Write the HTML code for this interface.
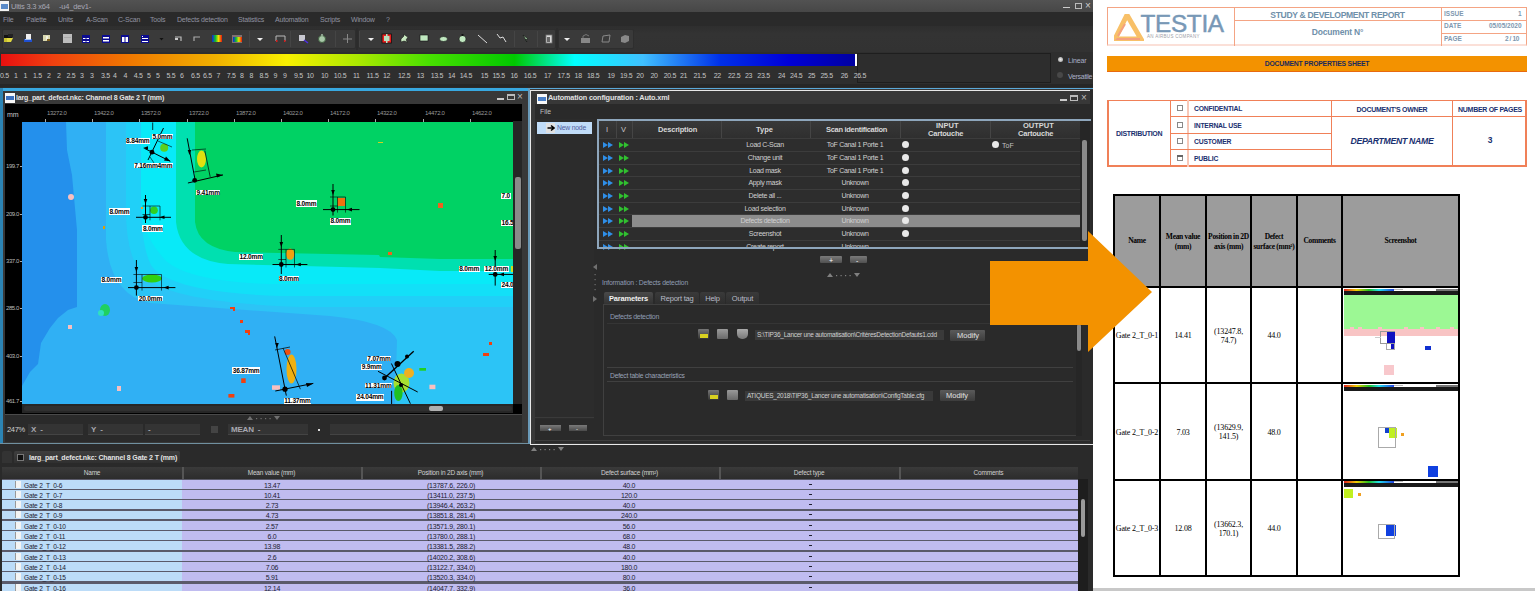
<!DOCTYPE html>
<html><head><meta charset="utf-8">
<style>
*{box-sizing:border-box;margin:0;padding:0}
html,body{width:1535px;height:591px;overflow:hidden;background:#fff;font-family:"Liberation Sans",sans-serif}
.a{position:absolute}
.t{position:absolute;white-space:nowrap;line-height:1}
#app{left:0;top:0;width:1093px;height:591px;background:#2b2b2b;overflow:hidden}
#doc{left:1093px;top:0;width:442px;height:591px;background:#fff;overflow:hidden}
svg{position:absolute}
</style></head><body>
<div id="app" class="a">

<div class="a" style="left:0px;top:0px;width:1093px;height:12px;background:linear-gradient(#525252,#474747)"></div>
<div class="a" style="left:0px;top:1px;width:9px;height:10px;background:#f4f4f4"></div>
<div class="a" style="left:1px;top:4px;width:7px;height:5px;background:#5a8ac8"></div>
<div class="t" style="left:11px;top:2.5px;font-size:7.5px;color:#a8a8b4;font-weight:normal;letter-spacing:-0.2px">Ultis 3.3 x64</div>
<div class="t" style="left:59px;top:2.5px;font-size:7.5px;color:#a8a8b4;font-weight:normal;letter-spacing:-0.2px">-u4_dev1-</div>
<div class="a" style="left:1063px;top:7px;width:7px;height:1px;background:#ccc"></div>
<div class="a" style="left:1075px;top:3px;width:7px;height:6px;border:1px solid #bbb"></div>
<div class="t" style="left:1085px;top:1px;font-size:10px;color:#ccc;font-weight:normal;">&#215;</div>
<div class="a" style="left:0px;top:12px;width:1093px;height:14px;background:#2a2a2a"></div>
<div class="t" style="left:3px;top:15.5px;font-size:7px;color:#9092a0;font-weight:normal;letter-spacing:-0.2px">File</div>
<div class="t" style="left:26px;top:15.5px;font-size:7px;color:#9092a0;font-weight:normal;letter-spacing:-0.2px">Palette</div>
<div class="t" style="left:58px;top:15.5px;font-size:7px;color:#9092a0;font-weight:normal;letter-spacing:-0.2px">Units</div>
<div class="t" style="left:86px;top:15.5px;font-size:7px;color:#9092a0;font-weight:normal;letter-spacing:-0.2px">A-Scan</div>
<div class="t" style="left:118px;top:15.5px;font-size:7px;color:#9092a0;font-weight:normal;letter-spacing:-0.2px">C-Scan</div>
<div class="t" style="left:150px;top:15.5px;font-size:7px;color:#9092a0;font-weight:normal;letter-spacing:-0.2px">Tools</div>
<div class="t" style="left:177px;top:15.5px;font-size:7px;color:#9092a0;font-weight:normal;letter-spacing:-0.2px">Defects detection</div>
<div class="t" style="left:238px;top:15.5px;font-size:7px;color:#9092a0;font-weight:normal;letter-spacing:-0.2px">Statistics</div>
<div class="t" style="left:275px;top:15.5px;font-size:7px;color:#9092a0;font-weight:normal;letter-spacing:-0.2px">Automation</div>
<div class="t" style="left:320px;top:15.5px;font-size:7px;color:#9092a0;font-weight:normal;letter-spacing:-0.2px">Scripts</div>
<div class="t" style="left:351px;top:15.5px;font-size:7px;color:#9092a0;font-weight:normal;letter-spacing:-0.2px">Window</div>
<div class="t" style="left:386px;top:15.5px;font-size:7px;color:#9092a0;font-weight:normal;letter-spacing:-0.2px">?</div>
<div class="a" style="left:0px;top:26px;width:1093px;height:26px;background:linear-gradient(#2e2e2e,#333 30%,#323232)"></div>
<div class="a" style="left:2px;top:29px;width:354px;height:20px;background:#3a3a3a;border:1px solid #2e2e2e;border-radius:2px"></div>
<div class="a" style="left:358px;top:29px;width:198px;height:20px;background:#3a3a3a;border:1px solid #2e2e2e;border-radius:2px"></div>
<div class="a" style="left:558px;top:29px;width:76px;height:20px;background:#3a3a3a;border:1px solid #2e2e2e;border-radius:2px"></div>
<svg style="left:0;top:0" width="640" height="52"><rect x="4" y="35" width="8" height="4" fill="#111"/><rect x="8" y="34" width="5" height="3" fill="#222"/><polygon points="4,42 6,38 13,38 11,42" fill="#e0d840"/><rect x="4" y="38" width="3" height="4" fill="#c8c030"/><rect x="26" y="34" width="5" height="5" fill="#f0f0f0"/><rect x="24" y="39" width="8" height="3" fill="#2050d0"/><rect x="25" y="39" width="6" height="1" fill="#a0c0f0"/><rect x="43" y="35" width="7" height="6" fill="#d8d8b0"/><rect x="46" y="36" width="2" height="4" fill="#f0f0e0"/><rect x="47" y="39" width="3" height="2" fill="#806020"/><rect x="63" y="34" width="9" height="9" fill="#bdbdbd"/><rect x="64" y="37" width="7" height="1" fill="#a8a8a8"/><rect x="82" y="35" width="8" height="8" fill="#0c0c90"/><rect x="83" y="38" width="6" height="1" fill="#fff"/><rect x="83" y="41" width="6" height="1" fill="#fff"/><rect x="85.5" y="36" width="1" height="6" fill="#0c0c90"/><rect x="102" y="35" width="8" height="8" fill="#0c0c90"/><rect x="103" y="37" width="6" height="1.5" fill="#fff"/><rect x="103" y="40" width="6" height="1.5" fill="#fff"/><rect x="121" y="35" width="8" height="8" fill="#0c0c90"/><rect x="122" y="37" width="2.5" height="5" fill="#fff"/><rect x="125.5" y="37" width="2.5" height="5" fill="#fff"/><rect x="141" y="35" width="8" height="8" fill="#0c0c90"/><rect x="142" y="38" width="6" height="1" fill="#fff"/><rect x="142" y="41" width="6" height="1" fill="#fff"/><rect x="142" y="36" width="1" height="1" fill="#fff"/><polygon points="159.5,38 163.5,38 161.5,40.5" fill="#111"/><path d="M175 37 h6 v4" fill="none" stroke="#bbb" stroke-width="1.2"/><rect x="175" y="38" width="3" height="2" fill="#ccc"/><path d="M200 37 h-6 v4" fill="none" stroke="#aaa" stroke-width="1.2"/><defs><linearGradient id="rb"><stop offset="0" stop-color="#1020e0"/><stop offset=".35" stop-color="#10c030"/><stop offset=".65" stop-color="#f0e000"/><stop offset="1" stop-color="#e81010"/></linearGradient></defs><rect x="212" y="35" width="10" height="7" fill="url(#rb)"/><rect x="232" y="35" width="10" height="8" fill="#807070"/><rect x="233" y="37" width="9" height="5" fill="url(#rb)"/><rect x="249" y="31" width="1" height="16" fill="#454545"/><polygon points="257,38 263,38 260,41" fill="#eee"/><path d="M276 36 h9 M276 36 v5 M285 36 v5" stroke="#b8b8b8" stroke-width="1"/><rect x="276" y="40" width="1.5" height="2" fill="#d02020"/><rect x="284" y="40" width="1.5" height="2" fill="#d02020"/><rect x="290" y="31" width="1" height="16" fill="#454545"/><rect x="299" y="35" width="6" height="6" fill="#c8c8d0"/><line x1="304" y1="40" x2="308" y2="43" stroke="#5030e0" stroke-width="1.5"/><circle cx="322" cy="39" r="3.5" fill="#a8c8a8" stroke="#406040" stroke-width="1"/><rect x="321" y="34" width="2" height="2" fill="#8aa08a"/><rect x="335" y="31" width="1" height="16" fill="#454545"/><path d="M343 39 h9 M347.5 34 v9" stroke="#888" stroke-width="1"/><rect x="356" y="28" width="2" height="22" fill="#2c2c2c"/><rect x="359" y="31" width="1" height="16" fill="#454545"/><polygon points="368,38 374,38 371,41" fill="#eee"/><rect x="382" y="34" width="9.5" height="9" fill="#e82020" stroke="#111" stroke-width="0.8"/><rect x="384" y="36" width="5.5" height="5" fill="#b8e0c0"/><rect x="386" y="34" width="1.5" height="9" fill="#b8e0c0"/><polygon points="401,39 404,36 404,34 406,36 408,37 406,40 408,42 404,41 401,42" fill="#c8e8c0" stroke="#111" stroke-width="0.5"/><rect x="420" y="35" width="8" height="6" fill="#c0e8c0" stroke="#111" stroke-width="0.6"/><ellipse cx="443.5" cy="39" rx="4" ry="2.5" fill="#c0e8c0" stroke="#111" stroke-width="0.6"/><circle cx="462.5" cy="39" r="3.5" fill="#c0e8c0" stroke="#111" stroke-width="0.6"/><rect x="461.5" y="34" width="2" height="2" fill="#111"/><line x1="478" y1="35" x2="487" y2="43" stroke="#ddd" stroke-width="1"/><polyline points="497,34 500,38 503,37 506,42" fill="none" stroke="#ddd" stroke-width="1"/><rect x="514" y="31" width="1" height="16" fill="#454545"/><polygon points="523,35 528,39 525,40 527,42" fill="#a8d8a8" stroke="#111" stroke-width="0.6"/><rect x="537" y="31" width="1" height="16" fill="#454545"/><rect x="546" y="35" width="6" height="8" fill="#d8d8d8" stroke="#777" stroke-width="0.8"/><rect x="547" y="37" width="3" height="5" fill="#666"/><rect x="556" y="28" width="2" height="22" fill="#2c2c2c"/><polygon points="564,38 570,38 567,41" fill="#eee"/><rect x="581" y="38" width="9" height="5" fill="#888"/><path d="M583 38 v-2 q3 -3 6 0" fill="none" stroke="#777"/><polygon points="603,36 610,35 609,42 602,42" fill="none" stroke="#888" stroke-width="1"/><polygon points="621,37 625,35 629,36 629,41 625,43 621,42" fill="#888"/></svg>
<div class="a" style="left:0px;top:52px;width:1093px;height:35px;background:#2e2e2e"></div>
<div class="a" style="left:0px;top:84px;width:1093px;height:3px;background:#262626"></div>
<div class="a" style="left:857px;top:53px;width:194px;height:30px;background:#2d2d2d;border:1px solid #1e1e1e"></div>
<div class="a" style="left:1px;top:54px;width:856px;height:12px;background:linear-gradient(90deg,#e81010 0%,#f04010 6%,#f07800 15%,#f0b000 25%,#f8f000 33.4%,#a8e800 42%,#48e000 50%,#00c800 60%,#00ffff 67%,#40c0ff 75%,#0030e8 84%,#0000d8 92%,#0000a0 100%)"></div>
<div class="a" style="left:855px;top:54px;width:2px;height:12px;background:#fff"></div>
<div class="t" style="left:0px;top:71.5px;font-size:7px;color:#c4c4c4;font-weight:normal;letter-spacing:-0.3px">0.5</div>
<div class="t" style="left:14px;top:71.5px;font-size:7px;color:#c4c4c4;font-weight:normal;letter-spacing:-0.3px">1</div>
<div class="t" style="left:23.5px;top:71.5px;font-size:7px;color:#c4c4c4;font-weight:normal;letter-spacing:-0.3px">1</div>
<div class="t" style="left:33px;top:71.5px;font-size:7px;color:#c4c4c4;font-weight:normal;letter-spacing:-0.3px">1.5</div>
<div class="t" style="left:47px;top:71.5px;font-size:7px;color:#c4c4c4;font-weight:normal;letter-spacing:-0.3px">2</div>
<div class="t" style="left:57px;top:71.5px;font-size:7px;color:#c4c4c4;font-weight:normal;letter-spacing:-0.3px">2</div>
<div class="t" style="left:66.5px;top:71.5px;font-size:7px;color:#c4c4c4;font-weight:normal;letter-spacing:-0.3px">2.5</div>
<div class="t" style="left:80px;top:71.5px;font-size:7px;color:#c4c4c4;font-weight:normal;letter-spacing:-0.3px">3</div>
<div class="t" style="left:90px;top:71.5px;font-size:7px;color:#c4c4c4;font-weight:normal;letter-spacing:-0.3px">3</div>
<div class="t" style="left:101px;top:71.5px;font-size:7px;color:#c4c4c4;font-weight:normal;letter-spacing:-0.3px">3.5</div>
<div class="t" style="left:113px;top:71.5px;font-size:7px;color:#c4c4c4;font-weight:normal;letter-spacing:-0.3px">4</div>
<div class="t" style="left:123.5px;top:71.5px;font-size:7px;color:#c4c4c4;font-weight:normal;letter-spacing:-0.3px">4</div>
<div class="t" style="left:133.7px;top:71.5px;font-size:7px;color:#c4c4c4;font-weight:normal;letter-spacing:-0.3px">4.5</div>
<div class="t" style="left:147px;top:71.5px;font-size:7px;color:#c4c4c4;font-weight:normal;letter-spacing:-0.3px">5</div>
<div class="t" style="left:156px;top:71.5px;font-size:7px;color:#c4c4c4;font-weight:normal;letter-spacing:-0.3px">5</div>
<div class="t" style="left:166.5px;top:71.5px;font-size:7px;color:#c4c4c4;font-weight:normal;letter-spacing:-0.3px">5.5</div>
<div class="t" style="left:180px;top:71.5px;font-size:7px;color:#c4c4c4;font-weight:normal;letter-spacing:-0.3px">6</div>
<div class="t" style="left:191px;top:71.5px;font-size:7px;color:#c4c4c4;font-weight:normal;letter-spacing:-0.3px">6.5</div>
<div class="t" style="left:203px;top:71.5px;font-size:7px;color:#c4c4c4;font-weight:normal;letter-spacing:-0.3px">6.5</div>
<div class="t" style="left:216.5px;top:71.5px;font-size:7px;color:#c4c4c4;font-weight:normal;letter-spacing:-0.3px">7</div>
<div class="t" style="left:226.7px;top:71.5px;font-size:7px;color:#c4c4c4;font-weight:normal;letter-spacing:-0.3px">7.5</div>
<div class="t" style="left:240px;top:71.5px;font-size:7px;color:#c4c4c4;font-weight:normal;letter-spacing:-0.3px">8</div>
<div class="t" style="left:249.4px;top:71.5px;font-size:7px;color:#c4c4c4;font-weight:normal;letter-spacing:-0.3px">8</div>
<div class="t" style="left:259.5px;top:71.5px;font-size:7px;color:#c4c4c4;font-weight:normal;letter-spacing:-0.3px">8.5</div>
<div class="t" style="left:273.6px;top:71.5px;font-size:7px;color:#c4c4c4;font-weight:normal;letter-spacing:-0.3px">9</div>
<div class="t" style="left:283px;top:71.5px;font-size:7px;color:#c4c4c4;font-weight:normal;letter-spacing:-0.3px">9</div>
<div class="t" style="left:294px;top:71.5px;font-size:7px;color:#c4c4c4;font-weight:normal;letter-spacing:-0.3px">9.5</div>
<div class="t" style="left:306.4px;top:71.5px;font-size:7px;color:#c4c4c4;font-weight:normal;letter-spacing:-0.3px">10</div>
<div class="t" style="left:321px;top:71.5px;font-size:7px;color:#c4c4c4;font-weight:normal;letter-spacing:-0.3px">10</div>
<div class="t" style="left:333.8px;top:71.5px;font-size:7px;color:#c4c4c4;font-weight:normal;letter-spacing:-0.3px">10.5</div>
<div class="t" style="left:353px;top:71.5px;font-size:7px;color:#c4c4c4;font-weight:normal;letter-spacing:-0.3px">11</div>
<div class="t" style="left:366.6px;top:71.5px;font-size:7px;color:#c4c4c4;font-weight:normal;letter-spacing:-0.3px">11.5</div>
<div class="t" style="left:383px;top:71.5px;font-size:7px;color:#c4c4c4;font-weight:normal;letter-spacing:-0.3px">12</div>
<div class="t" style="left:398px;top:71.5px;font-size:7px;color:#c4c4c4;font-weight:normal;letter-spacing:-0.3px">12.5</div>
<div class="t" style="left:416.7px;top:71.5px;font-size:7px;color:#c4c4c4;font-weight:normal;letter-spacing:-0.3px">13</div>
<div class="t" style="left:430.7px;top:71.5px;font-size:7px;color:#c4c4c4;font-weight:normal;letter-spacing:-0.3px">13.5</div>
<div class="t" style="left:448px;top:71.5px;font-size:7px;color:#c4c4c4;font-weight:normal;letter-spacing:-0.3px">14</div>
<div class="t" style="left:459.7px;top:71.5px;font-size:7px;color:#c4c4c4;font-weight:normal;letter-spacing:-0.3px">14.5</div>
<div class="t" style="left:480.8px;top:71.5px;font-size:7px;color:#c4c4c4;font-weight:normal;letter-spacing:-0.3px">15</div>
<div class="t" style="left:492.5px;top:71.5px;font-size:7px;color:#c4c4c4;font-weight:normal;letter-spacing:-0.3px">15.5</div>
<div class="t" style="left:510.5px;top:71.5px;font-size:7px;color:#c4c4c4;font-weight:normal;letter-spacing:-0.3px">16</div>
<div class="t" style="left:523.8px;top:71.5px;font-size:7px;color:#c4c4c4;font-weight:normal;letter-spacing:-0.3px">16.5</div>
<div class="t" style="left:544px;top:71.5px;font-size:7px;color:#c4c4c4;font-weight:normal;letter-spacing:-0.3px">17</div>
<div class="t" style="left:557.4px;top:71.5px;font-size:7px;color:#c4c4c4;font-weight:normal;letter-spacing:-0.3px">17.5</div>
<div class="t" style="left:574.6px;top:71.5px;font-size:7px;color:#c4c4c4;font-weight:normal;letter-spacing:-0.3px">18</div>
<div class="t" style="left:587px;top:71.5px;font-size:7px;color:#c4c4c4;font-weight:normal;letter-spacing:-0.3px">18.5</div>
<div class="t" style="left:607.4px;top:71.5px;font-size:7px;color:#c4c4c4;font-weight:normal;letter-spacing:-0.3px">19</div>
<div class="t" style="left:620px;top:71.5px;font-size:7px;color:#c4c4c4;font-weight:normal;letter-spacing:-0.3px">19.5</div>
<div class="t" style="left:636.3px;top:71.5px;font-size:7px;color:#c4c4c4;font-weight:normal;letter-spacing:-0.3px">20</div>
<div class="t" style="left:650.4px;top:71.5px;font-size:7px;color:#c4c4c4;font-weight:normal;letter-spacing:-0.3px">20</div>
<div class="t" style="left:663.7px;top:71.5px;font-size:7px;color:#c4c4c4;font-weight:normal;letter-spacing:-0.3px">20.5</div>
<div class="t" style="left:680px;top:71.5px;font-size:7px;color:#c4c4c4;font-weight:normal;letter-spacing:-0.3px">21</div>
<div class="t" style="left:693.4px;top:71.5px;font-size:7px;color:#c4c4c4;font-weight:normal;letter-spacing:-0.3px">21.5</div>
<div class="t" style="left:713.7px;top:71.5px;font-size:7px;color:#c4c4c4;font-weight:normal;letter-spacing:-0.3px">22</div>
<div class="t" style="left:728px;top:71.5px;font-size:7px;color:#c4c4c4;font-weight:normal;letter-spacing:-0.3px">22.5</div>
<div class="t" style="left:745px;top:71.5px;font-size:7px;color:#c4c4c4;font-weight:normal;letter-spacing:-0.3px">23</div>
<div class="t" style="left:757.3px;top:71.5px;font-size:7px;color:#c4c4c4;font-weight:normal;letter-spacing:-0.3px">23.5</div>
<div class="t" style="left:778px;top:71.5px;font-size:7px;color:#c4c4c4;font-weight:normal;letter-spacing:-0.3px">24</div>
<div class="t" style="left:790px;top:71.5px;font-size:7px;color:#c4c4c4;font-weight:normal;letter-spacing:-0.3px">24.5</div>
<div class="t" style="left:808px;top:71.5px;font-size:7px;color:#c4c4c4;font-weight:normal;letter-spacing:-0.3px">25</div>
<div class="t" style="left:820.5px;top:71.5px;font-size:7px;color:#c4c4c4;font-weight:normal;letter-spacing:-0.3px">25.5</div>
<div class="t" style="left:840.7px;top:71.5px;font-size:7px;color:#c4c4c4;font-weight:normal;letter-spacing:-0.3px">26</div>
<div class="t" style="left:853.7px;top:71.5px;font-size:7px;color:#c4c4c4;font-weight:normal;letter-spacing:-0.3px">26.5</div>
<div class="a" style="left:1058px;top:57px;width:5px;height:5px;background:radial-gradient(#eee,#999);border-radius:50%"></div>
<div class="t" style="left:1068px;top:56.5px;font-size:7px;color:#aab0c8;font-weight:normal;letter-spacing:-0.2px">Linear</div>
<div class="a" style="left:1057px;top:72px;width:6px;height:6px;background:#484848;border-radius:50%"></div>
<div class="t" style="left:1068px;top:72.5px;font-size:7px;color:#aab0c8;font-weight:normal;letter-spacing:-0.3px">Versatile</div>
<div class="a" style="left:0px;top:88px;width:531px;height:356px;background:#383838"></div>
<div class="a" style="left:0px;top:88px;width:530px;height:3px;background:#38a8e0"></div>
<div class="a" style="left:0px;top:88px;width:3px;height:356px;background:#2c84b4"></div>
<div class="a" style="left:0px;top:443px;width:530px;height:2px;background:#7090a0"></div>
<div class="a" style="left:528px;top:88px;width:2px;height:356px;background:#6a9ab8"></div>
<div class="a" style="left:5px;top:93px;width:10px;height:10px;background:#f8f8f8"></div>
<div class="a" style="left:6px;top:96px;width:8px;height:4px;background:#3a70c0"></div>
<div class="t" style="left:16px;top:93.5px;font-size:7px;color:#e4e4e4;font-weight:bold;letter-spacing:-0.15px">larg_part_defect.nkc: Channel 8 Gate 2 T (mm)</div>
<div class="a" style="left:497px;top:98px;width:7px;height:2px;background:#ccc"></div>
<div class="a" style="left:507px;top:94px;width:8px;height:6px;border:1px solid #bbb;border-top-width:2px"></div>
<div class="t" style="left:517px;top:92px;font-size:10px;color:#bbb;font-weight:normal;">&#215;</div>
<div class="a" style="left:5px;top:104px;width:517px;height:310px;background:#000"></div>
<div class="t" style="left:7px;top:111px;font-size:7px;color:#c8c8c8;font-weight:normal;">mm</div>
<div class="a" style="left:45px;top:119px;width:1px;height:3px;background:#aaa"></div>
<div class="t" style="left:47px;top:110px;font-size:6px;color:#999;font-weight:normal;letter-spacing:-0.3px">13272.0</div>
<div class="a" style="left:92px;top:119px;width:1px;height:3px;background:#aaa"></div>
<div class="t" style="left:94px;top:110px;font-size:6px;color:#999;font-weight:normal;letter-spacing:-0.3px">13422.0</div>
<div class="a" style="left:139px;top:119px;width:1px;height:3px;background:#aaa"></div>
<div class="t" style="left:141px;top:110px;font-size:6px;color:#999;font-weight:normal;letter-spacing:-0.3px">13572.0</div>
<div class="a" style="left:187px;top:119px;width:1px;height:3px;background:#aaa"></div>
<div class="t" style="left:189px;top:110px;font-size:6px;color:#999;font-weight:normal;letter-spacing:-0.3px">13722.0</div>
<div class="a" style="left:234px;top:119px;width:1px;height:3px;background:#aaa"></div>
<div class="t" style="left:236px;top:110px;font-size:6px;color:#999;font-weight:normal;letter-spacing:-0.3px">13872.0</div>
<div class="a" style="left:281px;top:119px;width:1px;height:3px;background:#aaa"></div>
<div class="t" style="left:283px;top:110px;font-size:6px;color:#999;font-weight:normal;letter-spacing:-0.3px">14022.0</div>
<div class="a" style="left:328px;top:119px;width:1px;height:3px;background:#aaa"></div>
<div class="t" style="left:330px;top:110px;font-size:6px;color:#999;font-weight:normal;letter-spacing:-0.3px">14172.0</div>
<div class="a" style="left:375px;top:119px;width:1px;height:3px;background:#aaa"></div>
<div class="t" style="left:377px;top:110px;font-size:6px;color:#999;font-weight:normal;letter-spacing:-0.3px">14322.0</div>
<div class="a" style="left:423px;top:119px;width:1px;height:3px;background:#aaa"></div>
<div class="t" style="left:425px;top:110px;font-size:6px;color:#999;font-weight:normal;letter-spacing:-0.3px">14472.0</div>
<div class="a" style="left:470px;top:119px;width:1px;height:3px;background:#aaa"></div>
<div class="t" style="left:472px;top:110px;font-size:6px;color:#999;font-weight:normal;letter-spacing:-0.3px">14622.0</div>
<div class="t" style="left:6px;top:163px;font-size:6px;color:#bbb;font-weight:normal;letter-spacing:-0.4px">199.7</div>
<div class="a" style="left:20px;top:166px;width:2px;height:1px;background:#aaa"></div>
<div class="t" style="left:6px;top:211px;font-size:6px;color:#bbb;font-weight:normal;letter-spacing:-0.4px">209.0</div>
<div class="a" style="left:20px;top:214px;width:2px;height:1px;background:#aaa"></div>
<div class="t" style="left:6px;top:258px;font-size:6px;color:#bbb;font-weight:normal;letter-spacing:-0.4px">337.0</div>
<div class="a" style="left:20px;top:261px;width:2px;height:1px;background:#aaa"></div>
<div class="t" style="left:6px;top:305px;font-size:6px;color:#bbb;font-weight:normal;letter-spacing:-0.4px">285.0</div>
<div class="a" style="left:20px;top:308px;width:2px;height:1px;background:#aaa"></div>
<div class="t" style="left:6px;top:353px;font-size:6px;color:#bbb;font-weight:normal;letter-spacing:-0.4px">403.0</div>
<div class="a" style="left:20px;top:356px;width:2px;height:1px;background:#aaa"></div>
<div class="t" style="left:6px;top:398px;font-size:6px;color:#bbb;font-weight:normal;letter-spacing:-0.4px">461.7</div>
<div class="a" style="left:20px;top:401px;width:2px;height:1px;background:#aaa"></div>
<div class="a" style="left:513px;top:121px;width:9px;height:283px;background:#262626"></div>
<div class="a" style="left:515px;top:177px;width:6px;height:72px;background:#8a8a8a;border-radius:2px"></div>
<div class="a" style="left:22px;top:404px;width:491px;height:9px;background:#262626"></div>
<div class="a" style="left:24px;top:406px;width:488px;height:5px;background:#303030;border-radius:2px"></div>
<div class="a" style="left:429px;top:406px;width:14px;height:5px;background:#b0b0b0;border-radius:2px"></div>
<div class="a" style="left:5px;top:414px;width:517px;height:1px;background:#4a4a4a"></div>
<div class="a" style="left:5px;top:415px;width:517px;height:27px;background:#2a2a2a"></div>
<div class="t" style="left:7px;top:426px;font-size:7.5px;color:#d0d0d0;font-weight:normal;letter-spacing:-0.3px">247%</div>
<div class="a" style="left:28px;top:424px;width:55px;height:11px;background:#343434;border-bottom:1px solid #444"></div>
<div class="t" style="left:31px;top:426px;font-size:8px;color:#a8a8b0;font-weight:bold;letter-spacing:-0.2px">X&nbsp; -</div>
<div class="a" style="left:88px;top:424px;width:55px;height:11px;background:#343434;border-bottom:1px solid #444"></div>
<div class="t" style="left:91px;top:426px;font-size:8px;color:#a8a8b0;font-weight:bold;letter-spacing:-0.2px">Y&nbsp; -</div>
<div class="a" style="left:145px;top:424px;width:55px;height:11px;background:#343434;border-bottom:1px solid #444"></div>
<div class="t" style="left:148px;top:426px;font-size:8px;color:#a8a8b0;font-weight:bold;letter-spacing:-0.2px">-</div>
<div class="a" style="left:228px;top:424px;width:80px;height:11px;background:#343434;border-bottom:1px solid #444"></div>
<div class="t" style="left:231px;top:426px;font-size:8px;color:#a8a8b0;font-weight:bold;letter-spacing:-0.2px">MEAN&nbsp; -</div>
<div class="a" style="left:330px;top:424px;width:70px;height:11px;background:#343434;border-bottom:1px solid #444"></div>
<div class="a" style="left:211px;top:426px;width:7px;height:7px;background:#444"></div>
<div class="a" style="left:318px;top:429px;width:2px;height:2px;background:#ddd"></div>
<svg style="left:246px;top:415px" width="36" height="6"><polygon points="1,5 4,1 7,5" fill="#707070"/><rect x="10.0" y="3" width="1.2" height="1.2" fill="#707070"/><rect x="14.5" y="3" width="1.2" height="1.2" fill="#707070"/><rect x="19.0" y="3" width="1.2" height="1.2" fill="#707070"/><rect x="23.5" y="3" width="1.2" height="1.2" fill="#707070"/><polygon points="28,1 34,1 31,5" fill="#707070"/></svg>
<svg style="left:22px;top:122px" width="491" height="282" viewBox="22 122 491 282">
<rect x="22" y="121" width="491" height="283" fill="#2cc4f6"/>
<path d="M126 122 L513 122 L513 307 L300 307 Q160 302 140 272 Q126 252 126 210 Z" fill="#20d0f8"/>
<path d="M141 122 L513 122 L513 296 L280 296 Q168 292 151 265 Q141 245 141 200 Z" fill="#12e0f8"/>
<path d="M141 122 L513 122 L513 284 L270 284 Q178 281 161 255 Q141 232 141 200 Z" fill="#08eaf8"/>
<path d="M176 122 L513 122 L513 271 L440 271 L380 268 L228 264 Q180 260 176 222 Z" fill="#00e0b0"/>
<path d="M195 122 L513 122 L513 259 L440 259 L380 257 L379 255 L235 252 Q198 248 195 222 Z" fill="#00d264"/>
<path d="M22 122 L106 122 L106 240 Q110 295 150 303 L330 316 Q390 322 397 340 L395 404 L22 404 Z" fill="#30b0f4"/>
<path d="M22 122 L66 122 L67 150 L72 175 L77 230 L77 307 L68 310 L58 318 L50 328 L41 343 L38 364 L30 372 L26 379 L22 386 Z" fill="#2490ec"/>
<ellipse cx="164.2" cy="147.8" rx="4" ry="4" fill="#5ad020"/>
<ellipse cx="201.5" cy="159" rx="4.5" ry="8.5" fill="#e0e010"/>
<ellipse cx="154" cy="210.2" rx="3.8" ry="3.8" fill="#30d020"/>
<rect x="337.5" y="198" width="7.5" height="8" fill="#f07010"/>
<ellipse cx="290.2" cy="254.2" rx="4.2" ry="5.6" fill="#f0a010"/>
<ellipse cx="152" cy="278.5" rx="10" ry="4" fill="#30d010"/>
<ellipse cx="291.5" cy="369" rx="5" ry="14.5" fill="#f0b010"/>
<ellipse cx="287.6" cy="352" rx="3" ry="3" fill="#f05010"/>
<ellipse cx="401.5" cy="383" rx="8" ry="9.5" fill="#a8e030"/>
<ellipse cx="409" cy="373" rx="5" ry="5" fill="#f0b020"/>
<ellipse cx="398.4" cy="393" rx="4.2" ry="8" fill="#20c020"/>
<ellipse cx="71" cy="197" rx="3" ry="3" fill="#f8c0c0"/>
<ellipse cx="105" cy="310" rx="5" ry="6" fill="#20d060"/>
<ellipse cx="101" cy="313" rx="3" ry="3" fill="#30e0c0"/>
<rect x="68" y="325" width="4" height="4" fill="#f8c0c0"/>
<rect x="117" y="386" width="4" height="5" fill="#f8c0c0"/>
<rect x="429.4" y="384.7" width="6" height="4.5" fill="#f8c0c0"/>
<rect x="272" y="385.3" width="8" height="4.5" fill="#f8c0c0"/>
<rect x="230" y="307" width="4" height="2" fill="#f04010"/>
<rect x="233" y="307" width="2" height="4" fill="#f04010"/>
<rect x="240" y="320" width="3" height="3" fill="#f04010"/>
<rect x="245" y="330" width="5" height="3" fill="#f04010"/>
<rect x="248" y="330" width="2" height="5" fill="#f04010"/>
<rect x="228.4" y="394" width="6" height="3.6" fill="#f04010"/>
<rect x="241.2" y="378.3" width="4.5" height="4.7" fill="#f04010"/>
<rect x="438" y="203" width="5" height="5" fill="#f06020"/>
<rect x="388" y="252" width="4" height="3" fill="#f06020"/>
<rect x="489" y="342" width="3" height="3" fill="#f04010"/>
<rect x="483" y="353" width="6" height="3" fill="#f04010"/>
<rect x="419.3" y="368" width="6.7" height="2.7" fill="#20d020"/>
<rect x="378" y="142" width="5" height="1" fill="#d0d020"/>
<rect x="141" y="207" width="2" height="2" fill="#f0a020"/>
<rect x="103" y="226" width="2" height="3" fill="#e0a000"/>
<rect x="511" y="266" width="2" height="6" fill="#d0e020"/>
<line x1="145.5" y1="195" x2="145.5" y2="223" stroke="#000" stroke-width="1"/>
<line x1="136" y1="217.3" x2="171" y2="217.3" stroke="#000" stroke-width="1"/>
<polygon points="143.7,199 147.3,199 145.5,204" fill="#000"/>
<polygon points="164.5,215.5 164.5,219.10000000000002 159.5,217.3" fill="#000"/>
<line x1="142.5" y1="206" x2="160" y2="206" stroke="#000" stroke-width="0.6"/>
<line x1="142.5" y1="214.5" x2="150" y2="214.5" stroke="#000" stroke-width="0.6"/>
<line x1="150" y1="206" x2="150" y2="220.3" stroke="#000" stroke-width="0.6"/>
<line x1="160" y1="206" x2="160" y2="220.3" stroke="#000" stroke-width="0.6"/>
<circle cx="145.5" cy="217.3" r="2.4" fill="#000"/>
<line x1="333" y1="184" x2="333" y2="215.5" stroke="#000" stroke-width="1"/>
<line x1="323" y1="209.6" x2="359.5" y2="209.6" stroke="#000" stroke-width="1"/>
<polygon points="331.2,190 334.8,190 333,195" fill="#000"/>
<polygon points="352,207.79999999999998 352,211.4 347,209.6" fill="#000"/>
<line x1="330" y1="197" x2="345.5" y2="197" stroke="#000" stroke-width="0.6"/>
<line x1="330" y1="206" x2="337.5" y2="206" stroke="#000" stroke-width="0.6"/>
<line x1="337.5" y1="197" x2="337.5" y2="212.6" stroke="#000" stroke-width="0.6"/>
<line x1="345.5" y1="197" x2="345.5" y2="212.6" stroke="#000" stroke-width="0.6"/>
<circle cx="333" cy="209.6" r="2.4" fill="#000"/>
<line x1="281.3" y1="235" x2="281.3" y2="274" stroke="#000" stroke-width="1"/>
<line x1="272.5" y1="264.5" x2="307.4" y2="264.5" stroke="#000" stroke-width="1"/>
<polygon points="279.5,242 283.1,242 281.3,247" fill="#000"/>
<polygon points="300.8,262.7 300.8,266.3 295.8,264.5" fill="#000"/>
<line x1="278.3" y1="249.4" x2="294.5" y2="249.4" stroke="#000" stroke-width="0.6"/>
<line x1="278.3" y1="259.5" x2="286" y2="259.5" stroke="#000" stroke-width="0.6"/>
<line x1="286" y1="249.4" x2="286" y2="267.5" stroke="#000" stroke-width="0.6"/>
<line x1="294.5" y1="249.4" x2="294.5" y2="267.5" stroke="#000" stroke-width="0.6"/>
<circle cx="281.3" cy="264.5" r="2.4" fill="#000"/>
<line x1="136.4" y1="260" x2="136.4" y2="295.6" stroke="#000" stroke-width="1"/>
<line x1="128" y1="287.6" x2="175.4" y2="287.6" stroke="#000" stroke-width="1"/>
<polygon points="134.6,267 138.20000000000002,267 136.4,272" fill="#000"/>
<polygon points="168.6,285.8 168.6,289.40000000000003 163.6,287.6" fill="#000"/>
<line x1="133.4" y1="274.5" x2="161.5" y2="274.5" stroke="#000" stroke-width="0.6"/>
<line x1="133.4" y1="282.5" x2="142" y2="282.5" stroke="#000" stroke-width="0.6"/>
<line x1="142" y1="274.5" x2="142" y2="290.6" stroke="#000" stroke-width="0.6"/>
<line x1="161.5" y1="274.5" x2="161.5" y2="290.6" stroke="#000" stroke-width="0.6"/>
<circle cx="136.4" cy="287.6" r="2.4" fill="#000"/>
<line x1="495.2" y1="250" x2="495.2" y2="285.6" stroke="#000" stroke-width="1"/>
<line x1="488.7" y1="274.4" x2="513" y2="274.4" stroke="#000" stroke-width="1"/>
<polygon points="493.4,256 497.0,256 495.2,261" fill="#000"/>
<circle cx="495.2" cy="274.4" r="2.4" fill="#000"/>
<polygon points="504,272.59999999999997 504,276.2 499,274.4" fill="#000"/>
<line x1="144.5" y1="148.4" x2="170.3" y2="161.3" stroke="#000" stroke-width="1"/>
<line x1="148" y1="160" x2="163.5" y2="128" stroke="#000" stroke-width="1"/>
<line x1="152.7" y1="122.5" x2="152.7" y2="130" stroke="#000" stroke-width="0.8"/>
<line x1="158" y1="141" x2="172" y2="147" stroke="#000" stroke-width="0.6"/>
<line x1="150" y1="157" x2="156" y2="166" stroke="#000" stroke-width="0.6"/>
<circle cx="152" cy="152.2" r="2.4" fill="#000"/>
<polygon points="148,146.2 148,149.8 143,148" fill="#000"/>
<polygon points="170.3,161.3 164,160.5 166,156.5" fill="#000"/>
<line x1="187.2" y1="138.3" x2="195.3" y2="181" stroke="#000" stroke-width="1"/>
<line x1="187.9" y1="183" x2="223" y2="174.9" stroke="#000" stroke-width="1"/>
<line x1="204.8" y1="150.5" x2="210.2" y2="176.9" stroke="#000" stroke-width="0.7"/>
<line x1="192" y1="150" x2="206" y2="149" stroke="#000" stroke-width="0.6"/>
<line x1="194" y1="172" x2="206" y2="170" stroke="#000" stroke-width="0.6"/>
<circle cx="194.7" cy="180.3" r="2.4" fill="#000"/>
<polygon points="187.7,150 191.3,150 189.5,155" fill="#000"/>
<polygon points="223,174.9 216,173.5 217,177.5" fill="#000"/>
<line x1="274.7" y1="336.4" x2="286.3" y2="395.6" stroke="#000" stroke-width="1"/>
<line x1="283" y1="348" x2="300.4" y2="389.2" stroke="#000" stroke-width="0.7"/>
<line x1="275.3" y1="391" x2="313.3" y2="383.4" stroke="#000" stroke-width="1"/>
<line x1="275" y1="350" x2="290" y2="347" stroke="#000" stroke-width="0.7"/>
<circle cx="285" cy="389.2" r="2.6" fill="#000"/>
<polygon points="275.2,343 278.8,343 277,348" fill="#000"/>
<polygon points="313.3,383.4 306,383 307,387" fill="#000"/>
<line x1="384.1" y1="378.5" x2="413.7" y2="351.2" stroke="#000" stroke-width="1.3"/>
<line x1="378" y1="371.3" x2="417.7" y2="392" stroke="#000" stroke-width="1"/>
<line x1="391.4" y1="363.5" x2="410.4" y2="403.7" stroke="#000" stroke-width="1"/>
<line x1="391.6" y1="390.8" x2="391.6" y2="404" stroke="#000" stroke-width="1"/>
<circle cx="384.5" cy="378" r="2.4" fill="#000"/>
<circle cx="397.5" cy="364" r="3" fill="#000"/>
<circle cx="407" cy="356.5" r="2" fill="#000"/>
<circle cx="401" cy="385" r="2" fill="#000"/>
</svg>
<div class="a" style="left:22px;top:122px;width:491px;height:282px;overflow:hidden">
<div class="t" style="left:130.0px;top:11.5px;height:5.0px;font-size:6.6px;color:#000;background:#fff;padding:0 0.5px;letter-spacing:-0.2px;line-height:5.0px;font-weight:bold">5.0mm</div>
<div class="t" style="left:103.6px;top:16.3px;height:6.1px;font-size:6.6px;color:#000;background:#fff;padding:0 0.5px;letter-spacing:-0.2px;line-height:6.1px;font-weight:bold">8.84mm</div>
<div class="t" style="left:111.7px;top:40.7px;height:5.3px;font-size:6.6px;color:#000;background:#fff;padding:0 0.5px;letter-spacing:-0.2px;line-height:5.3px;font-weight:bold">7.16mm4mm</div>
<div class="t" style="left:174.0px;top:67.8px;height:5.4px;font-size:6.6px;color:#000;background:#fff;padding:0 0.5px;letter-spacing:-0.2px;line-height:5.4px;font-weight:bold">9.41mm</div>
<div class="t" style="left:87.0px;top:85.9px;height:7.1px;font-size:6.6px;color:#000;background:#fff;padding:0 0.5px;letter-spacing:-0.2px;line-height:7.1px;font-weight:bold">8.0mm</div>
<div class="t" style="left:120.4px;top:102.8px;height:7.1px;font-size:6.6px;color:#000;background:#fff;padding:0 0.5px;letter-spacing:-0.2px;line-height:7.1px;font-weight:bold">8.0mm</div>
<div class="t" style="left:274.0px;top:78.0px;height:7.0px;font-size:6.6px;color:#000;background:#fff;padding:0 0.5px;letter-spacing:-0.2px;line-height:7.0px;font-weight:bold">8.0mm</div>
<div class="t" style="left:308.0px;top:96.0px;height:6.5px;font-size:6.6px;color:#000;background:#fff;padding:0 0.5px;letter-spacing:-0.2px;line-height:6.5px;font-weight:bold">8.0mm</div>
<div class="t" style="left:217.0px;top:131.7px;height:6.1px;font-size:6.6px;color:#000;background:#fff;padding:0 0.5px;letter-spacing:-0.2px;line-height:6.1px;font-weight:bold">12.0mm</div>
<div class="t" style="left:256.5px;top:153.6px;height:5.6px;font-size:6.6px;color:#000;background:#fff;padding:0 0.5px;letter-spacing:-0.2px;line-height:5.6px;font-weight:bold">8.0mm</div>
<div class="t" style="left:79.0px;top:154.6px;height:6.4px;font-size:6.6px;color:#000;background:#fff;padding:0 0.5px;letter-spacing:-0.2px;line-height:6.4px;font-weight:bold">8.0mm</div>
<div class="t" style="left:116.2px;top:173.6px;height:5.0px;font-size:6.6px;color:#000;background:#fff;padding:0 0.5px;letter-spacing:-0.2px;line-height:5.0px;font-weight:bold">20.0mm</div>
<div class="t" style="left:436.7px;top:144.3px;height:6.1px;font-size:6.6px;color:#000;background:#fff;padding:0 0.5px;letter-spacing:-0.2px;line-height:6.1px;font-weight:bold">8.0mm</div>
<div class="t" style="left:462.3px;top:143.5px;height:6.9px;font-size:6.6px;color:#000;background:#fff;padding:0 0.5px;letter-spacing:-0.2px;line-height:6.9px;font-weight:bold">12.0mm</div>
<div class="t" style="left:479.0px;top:159.5px;height:6.1px;font-size:6.6px;color:#000;background:#fff;padding:0 0.5px;letter-spacing:-0.2px;line-height:6.1px;font-weight:bold">24.0</div>
<div class="t" style="left:479.0px;top:71.2px;height:6.1px;font-size:6.6px;color:#000;background:#fff;padding:0 0.5px;letter-spacing:-0.2px;line-height:6.1px;font-weight:bold">7.0</div>
<div class="t" style="left:479.0px;top:98.0px;height:6.3px;font-size:6.6px;color:#000;background:#fff;padding:0 0.5px;letter-spacing:-0.2px;line-height:6.3px;font-weight:bold">16.5</div>
<div class="t" style="left:210.2px;top:245.3px;height:7.1px;font-size:6.6px;color:#000;background:#fff;padding:0 0.5px;letter-spacing:-0.2px;line-height:7.1px;font-weight:bold">36.87mm</div>
<div class="t" style="left:261.7px;top:276.2px;height:5.8px;font-size:6.6px;color:#000;background:#fff;padding:0 0.5px;letter-spacing:-0.2px;line-height:5.8px;font-weight:bold">11.37mm</div>
<div class="t" style="left:344.8px;top:233.6px;height:5.6px;font-size:6.6px;color:#000;background:#fff;padding:0 0.5px;letter-spacing:-0.2px;line-height:5.6px;font-weight:bold">7.07mm</div>
<div class="t" style="left:339.2px;top:242.0px;height:5.6px;font-size:6.6px;color:#000;background:#fff;padding:0 0.5px;letter-spacing:-0.2px;line-height:5.6px;font-weight:bold">9.9mm</div>
<div class="t" style="left:342.6px;top:260.5px;height:5.5px;font-size:6.6px;color:#000;background:#fff;padding:0 0.5px;letter-spacing:-0.2px;line-height:5.5px;font-weight:bold">11.31mm</div>
<div class="t" style="left:334.2px;top:272.2px;height:6.8px;font-size:6.6px;color:#000;background:#fff;padding:0 0.5px;letter-spacing:-0.2px;line-height:6.8px;font-weight:bold">24.04mm</div>
</div>
<div class="a" style="left:530px;top:88px;width:563px;height:356px;background:#383838"></div>
<div class="a" style="left:530px;top:88px;width:563px;height:1px;background:#5aa8d8"></div>
<div class="a" style="left:531px;top:90px;width:562px;height:1px;background:#e8e8e8"></div>
<div class="a" style="left:530px;top:90px;width:1px;height:354px;background:#e8e8e8"></div>
<div class="a" style="left:1090px;top:90px;width:3px;height:354px;background:#2a2a2a"></div>
<div class="a" style="left:537px;top:94px;width:10px;height:10px;background:#f8f8f8"></div>
<div class="a" style="left:538px;top:97px;width:8px;height:4px;background:#4a80c8"></div>
<div class="t" style="left:548px;top:93.5px;font-size:7.3px;color:#e0e0e0;font-weight:bold;letter-spacing:-0.15px">Automation configuration : Auto.xml</div>
<div class="a" style="left:1060px;top:99px;width:7px;height:2px;background:#ccc"></div>
<div class="a" style="left:1070px;top:95px;width:8px;height:6px;border:1px solid #bbb;border-top-width:2px"></div>
<div class="t" style="left:1081px;top:93px;font-size:10px;color:#bbb;font-weight:normal;">&#215;</div>
<div class="a" style="left:535px;top:104px;width:555px;height:15px;background:#2a2a2a"></div>
<div class="t" style="left:540px;top:108.5px;font-size:6.8px;color:#c0c0c0;font-weight:normal;">File</div>
<div class="a" style="left:535px;top:119px;width:555px;height:324px;background:#2a2a2a"></div>
<div class="a" style="left:535px;top:119px;width:59px;height:300px;background:#2c2c2c"></div>
<div class="a" style="left:537px;top:122px;width:55px;height:12px;background:#c0dcf8"></div>
<div class="a" style="left:546px;top:123px;width:9px;height:10px;background:#e0e0e0"></div>
<svg style="left:547px;top:124px" width="8" height="8"><path d="M0.5 4 H6 M4 1.5 L7 4 L4 6.5" stroke="#000" stroke-width="1.5" fill="none"/></svg>
<div class="t" style="left:557px;top:124.5px;font-size:6.8px;color:#5060a0;font-weight:normal;letter-spacing:-0.2px">New node</div>
<div class="a" style="left:597px;top:119px;width:494px;height:130px;background:#2d2d2d;border:2px solid #8ea6bc;border-right:none"></div>
<div class="a" style="left:599px;top:121px;width:481px;height:17px;background:linear-gradient(#383838,#2f2f2f)"></div>
<div class="a" style="left:616px;top:121px;width:1px;height:17px;background:#454545"></div>
<div class="a" style="left:632px;top:121px;width:1px;height:17px;background:#454545"></div>
<div class="a" style="left:721px;top:121px;width:1px;height:17px;background:#454545"></div>
<div class="a" style="left:810px;top:121px;width:1px;height:17px;background:#454545"></div>
<div class="a" style="left:900px;top:121px;width:1px;height:17px;background:#454545"></div>
<div class="a" style="left:990px;top:121px;width:1px;height:17px;background:#454545"></div>
<div class="t" style="left:606px;top:126px;font-size:7.5px;color:#c8c8c8;font-weight:normal;">I</div>
<div class="t" style="left:621px;top:126px;font-size:7.5px;color:#c8c8c8;font-weight:normal;">V</div>
<div class="t" style="left:658px;top:126px;font-size:7.5px;color:#d8d8d8;font-weight:bold;letter-spacing:-0.2px">Description</div>
<div class="t" style="left:756px;top:126px;font-size:7.5px;color:#d8d8d8;font-weight:bold;">Type</div>
<div class="t" style="left:826px;top:126px;font-size:7.5px;color:#d8d8d8;font-weight:bold;letter-spacing:-0.3px">Scan identification</div>
<div class="t" style="left:936px;top:122px;font-size:7.5px;color:#d8d8d8;font-weight:bold;">INPUT</div>
<div class="t" style="left:928px;top:130px;font-size:7.5px;color:#d8d8d8;font-weight:bold;letter-spacing:-0.2px">Cartouche</div>
<div class="t" style="left:1023px;top:122px;font-size:7.5px;color:#d8d8d8;font-weight:bold;">OUTPUT</div>
<div class="t" style="left:1018px;top:130px;font-size:7.5px;color:#d8d8d8;font-weight:bold;letter-spacing:-0.2px">Cartouche</div>
<div class="a" style="left:599px;top:138px;width:481px;height:1px;background:#3c3c3c"></div>
<svg style="left:602px;top:141px" width="30" height="8"><polygon points="1,1 6,4 1,7" fill="#2f8fe8"/><polygon points="6,1 11,4 6,7" fill="#2f8fe8"/><polygon points="17,1 22,4 17,7" fill="#30c030"/><polygon points="22,1 27,4 22,7" fill="#30c030"/></svg>
<div class="t" style="left:765px;top:141px;font-size:7px;color:#d0d0d0;font-weight:normal;transform:translateX(-50%);letter-spacing:-0.3px">Load C-Scan</div>
<div class="t" style="left:855px;top:141px;font-size:7px;color:#d0d0d0;font-weight:normal;transform:translateX(-50%);letter-spacing:-0.3px">ToF Canal 1 Porte 1</div>
<div class="a" style="left:902px;top:141px;width:7px;height:7px;background:#e8e8e8;border-radius:50%"></div>
<div class="a" style="left:599px;top:151px;width:481px;height:1px;background:#3c3c3c"></div>
<svg style="left:602px;top:154px" width="30" height="8"><polygon points="1,1 6,4 1,7" fill="#2f8fe8"/><polygon points="6,1 11,4 6,7" fill="#2f8fe8"/><polygon points="17,1 22,4 17,7" fill="#30c030"/><polygon points="22,1 27,4 22,7" fill="#30c030"/></svg>
<div class="t" style="left:765px;top:154px;font-size:7px;color:#d0d0d0;font-weight:normal;transform:translateX(-50%);letter-spacing:-0.3px">Change unit</div>
<div class="t" style="left:855px;top:154px;font-size:7px;color:#d0d0d0;font-weight:normal;transform:translateX(-50%);letter-spacing:-0.3px">ToF Canal 1 Porte 1</div>
<div class="a" style="left:902px;top:154px;width:7px;height:7px;background:#e8e8e8;border-radius:50%"></div>
<div class="a" style="left:599px;top:164px;width:481px;height:1px;background:#3c3c3c"></div>
<svg style="left:602px;top:167px" width="30" height="8"><polygon points="1,1 6,4 1,7" fill="#2f8fe8"/><polygon points="6,1 11,4 6,7" fill="#2f8fe8"/><polygon points="17,1 22,4 17,7" fill="#30c030"/><polygon points="22,1 27,4 22,7" fill="#30c030"/></svg>
<div class="t" style="left:765px;top:167px;font-size:7px;color:#d0d0d0;font-weight:normal;transform:translateX(-50%);letter-spacing:-0.3px">Load mask</div>
<div class="t" style="left:855px;top:167px;font-size:7px;color:#d0d0d0;font-weight:normal;transform:translateX(-50%);letter-spacing:-0.3px">ToF Canal 1 Porte 1</div>
<div class="a" style="left:902px;top:167px;width:7px;height:7px;background:#e8e8e8;border-radius:50%"></div>
<div class="a" style="left:599px;top:176px;width:481px;height:1px;background:#3c3c3c"></div>
<svg style="left:602px;top:179px" width="30" height="8"><polygon points="1,1 6,4 1,7" fill="#2f8fe8"/><polygon points="6,1 11,4 6,7" fill="#2f8fe8"/><polygon points="17,1 22,4 17,7" fill="#30c030"/><polygon points="22,1 27,4 22,7" fill="#30c030"/></svg>
<div class="t" style="left:765px;top:179px;font-size:7px;color:#d0d0d0;font-weight:normal;transform:translateX(-50%);letter-spacing:-0.3px">Apply mask</div>
<div class="t" style="left:855px;top:179px;font-size:7px;color:#d0d0d0;font-weight:normal;transform:translateX(-50%);letter-spacing:-0.3px">Unknown</div>
<div class="a" style="left:902px;top:179px;width:7px;height:7px;background:#e8e8e8;border-radius:50%"></div>
<div class="a" style="left:599px;top:189px;width:481px;height:1px;background:#3c3c3c"></div>
<svg style="left:602px;top:192px" width="30" height="8"><polygon points="1,1 6,4 1,7" fill="#2f8fe8"/><polygon points="6,1 11,4 6,7" fill="#2f8fe8"/><polygon points="17,1 22,4 17,7" fill="#30c030"/><polygon points="22,1 27,4 22,7" fill="#30c030"/></svg>
<div class="t" style="left:765px;top:192px;font-size:7px;color:#d0d0d0;font-weight:normal;transform:translateX(-50%);letter-spacing:-0.3px">Delete all ...</div>
<div class="t" style="left:855px;top:192px;font-size:7px;color:#d0d0d0;font-weight:normal;transform:translateX(-50%);letter-spacing:-0.3px">Unknown</div>
<div class="a" style="left:902px;top:192px;width:7px;height:7px;background:#e8e8e8;border-radius:50%"></div>
<div class="a" style="left:599px;top:202px;width:481px;height:1px;background:#3c3c3c"></div>
<svg style="left:602px;top:205px" width="30" height="8"><polygon points="1,1 6,4 1,7" fill="#2f8fe8"/><polygon points="6,1 11,4 6,7" fill="#2f8fe8"/><polygon points="17,1 22,4 17,7" fill="#30c030"/><polygon points="22,1 27,4 22,7" fill="#30c030"/></svg>
<div class="t" style="left:765px;top:205px;font-size:7px;color:#d0d0d0;font-weight:normal;transform:translateX(-50%);letter-spacing:-0.3px">Load selection</div>
<div class="t" style="left:855px;top:205px;font-size:7px;color:#d0d0d0;font-weight:normal;transform:translateX(-50%);letter-spacing:-0.3px">Unknown</div>
<div class="a" style="left:902px;top:205px;width:7px;height:7px;background:#e8e8e8;border-radius:50%"></div>
<div class="a" style="left:599px;top:214px;width:481px;height:1px;background:#3c3c3c"></div>
<div class="a" style="left:632px;top:215px;width:448px;height:12px;background:#8c8c8c"></div>
<svg style="left:602px;top:217px" width="30" height="8"><polygon points="1,1 6,4 1,7" fill="#2f8fe8"/><polygon points="6,1 11,4 6,7" fill="#2f8fe8"/><polygon points="17,1 22,4 17,7" fill="#30c030"/><polygon points="22,1 27,4 22,7" fill="#30c030"/></svg>
<div class="t" style="left:765px;top:217px;font-size:7px;color:#d0d0d0;font-weight:normal;transform:translateX(-50%);letter-spacing:-0.3px">Defects detection</div>
<div class="t" style="left:855px;top:217px;font-size:7px;color:#d0d0d0;font-weight:normal;transform:translateX(-50%);letter-spacing:-0.3px">Unknown</div>
<div class="a" style="left:902px;top:217px;width:7px;height:7px;background:#e8e8e8;border-radius:50%"></div>
<div class="a" style="left:599px;top:227px;width:481px;height:1px;background:#3c3c3c"></div>
<svg style="left:602px;top:230px" width="30" height="8"><polygon points="1,1 6,4 1,7" fill="#2f8fe8"/><polygon points="6,1 11,4 6,7" fill="#2f8fe8"/><polygon points="17,1 22,4 17,7" fill="#30c030"/><polygon points="22,1 27,4 22,7" fill="#30c030"/></svg>
<div class="t" style="left:765px;top:230px;font-size:7px;color:#d0d0d0;font-weight:normal;transform:translateX(-50%);letter-spacing:-0.3px">Screenshot</div>
<div class="t" style="left:855px;top:230px;font-size:7px;color:#d0d0d0;font-weight:normal;transform:translateX(-50%);letter-spacing:-0.3px">Unknown</div>
<div class="a" style="left:902px;top:230px;width:7px;height:7px;background:#e8e8e8;border-radius:50%"></div>
<div class="a" style="left:599px;top:240px;width:481px;height:1px;background:#3c3c3c"></div>
<svg style="left:602px;top:243px" width="30" height="8"><polygon points="1,1 6,4 1,7" fill="#2f8fe8"/><polygon points="6,1 11,4 6,7" fill="#2f8fe8"/><polygon points="17,1 22,4 17,7" fill="#30c030"/><polygon points="22,1 27,4 22,7" fill="#30c030"/></svg>
<div class="t" style="left:765px;top:243px;font-size:7px;color:#d0d0d0;font-weight:normal;transform:translateX(-50%);letter-spacing:-0.3px">Create report</div>
<div class="t" style="left:855px;top:243px;font-size:7px;color:#d0d0d0;font-weight:normal;transform:translateX(-50%);letter-spacing:-0.3px">Unknown</div>
<div class="a" style="left:992px;top:141px;width:7px;height:7px;background:#e8e8e8;border-radius:50%"></div>
<div class="t" style="left:1002px;top:142px;font-size:7px;color:#c0c0c0;font-weight:normal;">ToF</div>
<div class="a" style="left:1080px;top:121px;width:10px;height:126px;background:#262626"></div>
<div class="a" style="left:1082px;top:140px;width:5px;height:101px;background:#8a8a8a;border-radius:2px"></div>
<div class="a" style="left:597px;top:247px;width:494px;height:2px;background:#8ea6bc"></div>
<div class="a" style="left:820px;top:256px;width:22px;height:7px;background:linear-gradient(#7a7a7a,#505050);border-radius:1px"></div>
<div class="t" style="left:829px;top:257px;font-size:7px;color:#fff;font-weight:normal;">+</div>
<div class="a" style="left:850px;top:256px;width:17px;height:7px;background:linear-gradient(#7a7a7a,#505050);border-radius:1px"></div>
<div class="t" style="left:856px;top:257px;font-size:7px;color:#fff;font-weight:normal;">-</div>
<svg style="left:826px;top:272px" width="36" height="6"><polygon points="1,5 4,1 7,5" fill="#808080"/><rect x="10.0" y="3" width="1.2" height="1.2" fill="#808080"/><rect x="14.5" y="3" width="1.2" height="1.2" fill="#808080"/><rect x="19.0" y="3" width="1.2" height="1.2" fill="#808080"/><rect x="23.5" y="3" width="1.2" height="1.2" fill="#808080"/><polygon points="28,1 34,1 31,5" fill="#808080"/></svg>
<svg style="left:592px;top:263px" width="7" height="40"><polygon points="5,1 1,4 5,7" fill="#707070"/><rect x="2.5" y="11" width="1.2" height="1.2" fill="#707070"/><rect x="2.5" y="16" width="1.2" height="1.2" fill="#707070"/><rect x="2.5" y="21" width="1.2" height="1.2" fill="#707070"/><rect x="2.5" y="26" width="1.2" height="1.2" fill="#707070"/><polygon points="1,33 5,36 1,39" fill="#707070"/></svg>
<div class="t" style="left:602px;top:280px;font-size:6.8px;color:#8e9cb4;font-weight:normal;letter-spacing:-0.2px">Information : Defects detection</div>
<div class="a" style="left:604px;top:292px;width:49px;height:12px;background:linear-gradient(#4a4a4a,#333);border-radius:2px 2px 0 0"></div>
<div class="t" style="left:628.5px;top:295px;font-size:7.5px;color:#f0f0f0;font-weight:bold;transform:translateX(-50%);letter-spacing:-0.2px">Parameters</div>
<div class="a" style="left:655px;top:292px;width:44px;height:12px;background:linear-gradient(#3a3a3a,#2e2e2e);border-radius:2px 2px 0 0"></div>
<div class="t" style="left:677.0px;top:295px;font-size:7.5px;color:#b8bcc8;font-weight:normal;transform:translateX(-50%);letter-spacing:-0.2px">Report tag</div>
<div class="a" style="left:700px;top:292px;width:25px;height:12px;background:linear-gradient(#3a3a3a,#2e2e2e);border-radius:2px 2px 0 0"></div>
<div class="t" style="left:712.5px;top:295px;font-size:7.5px;color:#b8bcc8;font-weight:normal;transform:translateX(-50%);letter-spacing:-0.2px">Help</div>
<div class="a" style="left:726px;top:292px;width:33px;height:12px;background:linear-gradient(#3a3a3a,#2e2e2e);border-radius:2px 2px 0 0"></div>
<div class="t" style="left:742.5px;top:295px;font-size:7.5px;color:#b8bcc8;font-weight:normal;transform:translateX(-50%);letter-spacing:-0.2px">Output</div>
<div class="a" style="left:603px;top:304px;width:477px;height:132px;background:#2a2a2a;border:1px solid #404040"></div>
<div class="t" style="left:610px;top:313px;font-size:7px;color:#8e9cb4;font-weight:normal;letter-spacing:-0.3px">Defects detection</div>
<div class="a" style="left:607px;top:323px;width:466px;height:1px;background:#353535"></div>
<div class="a" style="left:607px;top:367px;width:466px;height:1px;background:#404040"></div>
<div class="t" style="left:610px;top:372.5px;font-size:6.7px;color:#9aa4b8;font-weight:normal;letter-spacing:-0.2px">Defect table characteristics</div>
<div class="a" style="left:607px;top:381px;width:466px;height:1px;background:#404040"></div>
<div class="a" style="left:698px;top:329px;width:11px;height:10px;background:linear-gradient(#777,#333);border-radius:1px"></div>
<div class="a" style="left:700px;top:334px;width:8px;height:4px;background:#d8d020"></div>
<div class="a" style="left:717px;top:329px;width:11px;height:10px;background:linear-gradient(#9a9a9a,#6a6a6a);border-radius:1px"></div>
<div class="a" style="left:737px;top:329px;width:11px;height:10px;background:linear-gradient(#aaa,#777);border-radius:1px 1px 5px 5px"></div>
<div class="a" style="left:755px;top:330px;width:189px;height:10px;background:#3a3a3a"></div>
<div class="t" style="left:757px;top:332px;font-size:6.5px;color:#d0d0d0;font-weight:normal;letter-spacing:-0.25px">S:\TIP36_Lancer une automatisation\CritèresDetectionDefauts1.cdd</div>
<div class="a" style="left:950px;top:330px;width:35px;height:11px;background:linear-gradient(#5a5a5a,#3c3c3c);border-radius:1px"></div>
<div class="t" style="left:957px;top:332px;font-size:7.5px;color:#e0e0e0;font-weight:normal;">Modify</div>
<div class="a" style="left:708px;top:390px;width:11px;height:10px;background:linear-gradient(#777,#333);border-radius:1px"></div>
<div class="a" style="left:710px;top:395px;width:8px;height:4px;background:#d8d020"></div>
<div class="a" style="left:727px;top:390px;width:11px;height:10px;background:linear-gradient(#9a9a9a,#6a6a6a);border-radius:1px"></div>
<div class="a" style="left:745px;top:391px;width:188px;height:10px;background:#3a3a3a"></div>
<div class="t" style="left:747px;top:393px;font-size:6.5px;color:#d0d0d0;font-weight:normal;letter-spacing:-0.25px">ATIQUES_2018\TIP36_Lancer une automatisation\ConfigTable.cfg</div>
<div class="a" style="left:940px;top:390px;width:35px;height:11px;background:linear-gradient(#5a5a5a,#3c3c3c);border-radius:1px"></div>
<div class="t" style="left:946px;top:392px;font-size:7.5px;color:#e0e0e0;font-weight:normal;">Modify</div>
<div class="a" style="left:1076px;top:310px;width:6px;height:126px;background:#262626"></div>
<div class="a" style="left:1077px;top:324px;width:4px;height:27px;background:#8a8a8a;border-radius:2px"></div>
<div class="a" style="left:535px;top:417px;width:59px;height:1px;background:#3a3a3a"></div>
<div class="a" style="left:540px;top:425px;width:21px;height:6px;background:linear-gradient(#7a7a7a,#4a4a4a)"></div>
<div class="t" style="left:548px;top:426px;font-size:6px;color:#fff;font-weight:normal;">+</div>
<div class="a" style="left:569px;top:425px;width:18px;height:6px;background:linear-gradient(#7a7a7a,#4a4a4a)"></div>
<div class="t" style="left:576px;top:426px;font-size:6px;color:#fff;font-weight:normal;">-</div>
<div class="a" style="left:0px;top:444px;width:1093px;height:147px;background:#2a2a2a"></div>
<div class="a" style="left:535px;top:440px;width:555px;height:1px;background:#3e3e3e"></div>
<div class="a" style="left:530px;top:443.5px;width:563px;height:1.5px;background:#e8e8e8"></div>
<svg style="left:530px;top:446px" width="36" height="6"><polygon points="1,5 4,1 7,5" fill="#808080"/><rect x="10.0" y="3" width="1.2" height="1.2" fill="#808080"/><rect x="14.5" y="3" width="1.2" height="1.2" fill="#808080"/><rect x="19.0" y="3" width="1.2" height="1.2" fill="#808080"/><rect x="23.5" y="3" width="1.2" height="1.2" fill="#808080"/><polygon points="28,1 34,1 31,5" fill="#808080"/></svg>
<div class="a" style="left:2px;top:451px;width:10px;height:12px;background:#333;border-radius:2px 2px 0 0"></div>
<div class="a" style="left:14px;top:451px;width:166px;height:12px;background:linear-gradient(#3e3e3e,#303030);border-radius:2px 2px 0 0"></div>
<div class="a" style="left:17px;top:454px;width:7px;height:7px;background:#111;border:1px solid #777"></div>
<div class="t" style="left:29px;top:453.5px;font-size:7px;color:#e4e4e4;font-weight:bold;letter-spacing:-0.15px">larg_part_defect.nkc: Channel 8 Gate 2 T (mm)</div>
<div class="a" style="left:2px;top:467px;width:1076px;height:12px;background:linear-gradient(#3a3a3a,#2c2c2c)"></div>
<div class="t" style="left:92.0px;top:470px;font-size:6.5px;color:#d0d0d0;font-weight:normal;transform:translateX(-50%);letter-spacing:-0.2px">Name</div>
<div class="a" style="left:182px;top:467px;width:2px;height:12px;background:#555"></div>
<div class="t" style="left:271.5px;top:470px;font-size:6.5px;color:#d0d0d0;font-weight:normal;transform:translateX(-50%);letter-spacing:-0.2px">Mean value (mm)</div>
<div class="a" style="left:361px;top:467px;width:2px;height:12px;background:#555"></div>
<div class="t" style="left:450.5px;top:470px;font-size:6.5px;color:#d0d0d0;font-weight:normal;transform:translateX(-50%);letter-spacing:-0.2px">Position in 2D axis (mm)</div>
<div class="a" style="left:540px;top:467px;width:2px;height:12px;background:#555"></div>
<div class="t" style="left:629.5px;top:470px;font-size:6.5px;color:#d0d0d0;font-weight:normal;transform:translateX(-50%);letter-spacing:-0.2px">Defect surface (mm&#178;)</div>
<div class="a" style="left:719px;top:467px;width:2px;height:12px;background:#555"></div>
<div class="t" style="left:809.0px;top:470px;font-size:6.5px;color:#d0d0d0;font-weight:normal;transform:translateX(-50%);letter-spacing:-0.2px">Defect type</div>
<div class="a" style="left:899px;top:467px;width:2px;height:12px;background:#555"></div>
<div class="t" style="left:988.5px;top:470px;font-size:6.5px;color:#d0d0d0;font-weight:normal;transform:translateX(-50%);letter-spacing:-0.2px">Comments</div>
<div class="a" style="left:2px;top:479px;width:1076px;height:112px;background:#5a5a6a"></div>
<div class="a" style="left:2px;top:480px;width:180px;height:9px;background:#bcdcf8"></div>
<div class="a" style="left:182px;top:480px;width:896px;height:9px;background:#c0bcf0"></div>
<div class="a" style="left:15px;top:481px;width:6px;height:7px;background:#f4f4f4;border-left:1px solid #999"></div>
<div class="t" style="left:24px;top:481px;font-size:6.6px;color:#202030;font-weight:normal;letter-spacing:-0.2px;line-height:9px">Gate 2_T_0-6</div>
<div class="t" style="left:272px;top:482px;font-size:7px;color:#202030;font-weight:normal;transform:translateX(-50%);letter-spacing:-0.3px">13.47</div>
<div class="t" style="left:451px;top:482px;font-size:7px;color:#202030;font-weight:normal;transform:translateX(-50%);letter-spacing:-0.2px">(13787.6, 226.0)</div>
<div class="t" style="left:629px;top:482px;font-size:7px;color:#202030;font-weight:normal;transform:translateX(-50%);letter-spacing:-0.3px">40.0</div>
<div class="a" style="left:809px;top:484px;width:3px;height:1px;background:#202030"></div>
<div class="a" style="left:2px;top:490px;width:180px;height:9px;background:#bcdcf8"></div>
<div class="a" style="left:182px;top:490px;width:896px;height:9px;background:#c0bcf0"></div>
<div class="a" style="left:15px;top:491px;width:6px;height:7px;background:#f4f4f4;border-left:1px solid #999"></div>
<div class="t" style="left:24px;top:491px;font-size:6.6px;color:#202030;font-weight:normal;letter-spacing:-0.2px;line-height:9px">Gate 2_T_0-7</div>
<div class="t" style="left:272px;top:492px;font-size:7px;color:#202030;font-weight:normal;transform:translateX(-50%);letter-spacing:-0.3px">10.41</div>
<div class="t" style="left:451px;top:492px;font-size:7px;color:#202030;font-weight:normal;transform:translateX(-50%);letter-spacing:-0.2px">(13411.0, 237.5)</div>
<div class="t" style="left:629px;top:492px;font-size:7px;color:#202030;font-weight:normal;transform:translateX(-50%);letter-spacing:-0.3px">120.0</div>
<div class="a" style="left:809px;top:494px;width:3px;height:1px;background:#202030"></div>
<div class="a" style="left:2px;top:500px;width:180px;height:9px;background:#bcdcf8"></div>
<div class="a" style="left:182px;top:500px;width:896px;height:9px;background:#c0bcf0"></div>
<div class="a" style="left:15px;top:501px;width:6px;height:7px;background:#f4f4f4;border-left:1px solid #999"></div>
<div class="t" style="left:24px;top:501px;font-size:6.6px;color:#202030;font-weight:normal;letter-spacing:-0.2px;line-height:9px">Gate 2_T_0-8</div>
<div class="t" style="left:272px;top:502px;font-size:7px;color:#202030;font-weight:normal;transform:translateX(-50%);letter-spacing:-0.3px">2.73</div>
<div class="t" style="left:451px;top:502px;font-size:7px;color:#202030;font-weight:normal;transform:translateX(-50%);letter-spacing:-0.2px">(13946.4, 263.2)</div>
<div class="t" style="left:629px;top:502px;font-size:7px;color:#202030;font-weight:normal;transform:translateX(-50%);letter-spacing:-0.3px">40.0</div>
<div class="a" style="left:809px;top:504px;width:3px;height:1px;background:#202030"></div>
<div class="a" style="left:2px;top:511px;width:180px;height:8px;background:#bcdcf8"></div>
<div class="a" style="left:182px;top:511px;width:896px;height:8px;background:#c0bcf0"></div>
<div class="a" style="left:15px;top:511px;width:6px;height:7px;background:#f4f4f4;border-left:1px solid #999"></div>
<div class="t" style="left:24px;top:511px;font-size:6.6px;color:#202030;font-weight:normal;letter-spacing:-0.2px;line-height:9px">Gate 2_T_0-9</div>
<div class="t" style="left:272px;top:512px;font-size:7px;color:#202030;font-weight:normal;transform:translateX(-50%);letter-spacing:-0.3px">4.73</div>
<div class="t" style="left:451px;top:512px;font-size:7px;color:#202030;font-weight:normal;transform:translateX(-50%);letter-spacing:-0.2px">(13851.8, 281.4)</div>
<div class="t" style="left:629px;top:512px;font-size:7px;color:#202030;font-weight:normal;transform:translateX(-50%);letter-spacing:-0.3px">240.0</div>
<div class="a" style="left:809px;top:514px;width:3px;height:1px;background:#202030"></div>
<div class="a" style="left:2px;top:521px;width:180px;height:9px;background:#bcdcf8"></div>
<div class="a" style="left:182px;top:521px;width:896px;height:9px;background:#c0bcf0"></div>
<div class="a" style="left:15px;top:522px;width:6px;height:7px;background:#f4f4f4;border-left:1px solid #999"></div>
<div class="t" style="left:24px;top:522px;font-size:6.6px;color:#202030;font-weight:normal;letter-spacing:-0.2px;line-height:9px">Gate 2_T_0-10</div>
<div class="t" style="left:272px;top:523px;font-size:7px;color:#202030;font-weight:normal;transform:translateX(-50%);letter-spacing:-0.3px">2.57</div>
<div class="t" style="left:451px;top:523px;font-size:7px;color:#202030;font-weight:normal;transform:translateX(-50%);letter-spacing:-0.2px">(13571.9, 280.1)</div>
<div class="t" style="left:629px;top:523px;font-size:7px;color:#202030;font-weight:normal;transform:translateX(-50%);letter-spacing:-0.3px">56.0</div>
<div class="a" style="left:809px;top:525px;width:3px;height:1px;background:#202030"></div>
<div class="a" style="left:2px;top:531px;width:180px;height:9px;background:#bcdcf8"></div>
<div class="a" style="left:182px;top:531px;width:896px;height:9px;background:#c0bcf0"></div>
<div class="a" style="left:15px;top:532px;width:6px;height:7px;background:#f4f4f4;border-left:1px solid #999"></div>
<div class="t" style="left:24px;top:532px;font-size:6.6px;color:#202030;font-weight:normal;letter-spacing:-0.2px;line-height:9px">Gate 2_T_0-11</div>
<div class="t" style="left:272px;top:533px;font-size:7px;color:#202030;font-weight:normal;transform:translateX(-50%);letter-spacing:-0.3px">6.0</div>
<div class="t" style="left:451px;top:533px;font-size:7px;color:#202030;font-weight:normal;transform:translateX(-50%);letter-spacing:-0.2px">(13780.0, 288.1)</div>
<div class="t" style="left:629px;top:533px;font-size:7px;color:#202030;font-weight:normal;transform:translateX(-50%);letter-spacing:-0.3px">68.0</div>
<div class="a" style="left:809px;top:535px;width:3px;height:1px;background:#202030"></div>
<div class="a" style="left:2px;top:541px;width:180px;height:9px;background:#bcdcf8"></div>
<div class="a" style="left:182px;top:541px;width:896px;height:9px;background:#c0bcf0"></div>
<div class="a" style="left:15px;top:542px;width:6px;height:7px;background:#f4f4f4;border-left:1px solid #999"></div>
<div class="t" style="left:24px;top:542px;font-size:6.6px;color:#202030;font-weight:normal;letter-spacing:-0.2px;line-height:9px">Gate 2_T_0-12</div>
<div class="t" style="left:272px;top:543px;font-size:7px;color:#202030;font-weight:normal;transform:translateX(-50%);letter-spacing:-0.3px">13.98</div>
<div class="t" style="left:451px;top:543px;font-size:7px;color:#202030;font-weight:normal;transform:translateX(-50%);letter-spacing:-0.2px">(13381.5, 288.2)</div>
<div class="t" style="left:629px;top:543px;font-size:7px;color:#202030;font-weight:normal;transform:translateX(-50%);letter-spacing:-0.3px">48.0</div>
<div class="a" style="left:809px;top:545px;width:3px;height:1px;background:#202030"></div>
<div class="a" style="left:2px;top:552px;width:180px;height:9px;background:#bcdcf8"></div>
<div class="a" style="left:182px;top:552px;width:896px;height:9px;background:#c0bcf0"></div>
<div class="a" style="left:15px;top:553px;width:6px;height:7px;background:#f4f4f4;border-left:1px solid #999"></div>
<div class="t" style="left:24px;top:553px;font-size:6.6px;color:#202030;font-weight:normal;letter-spacing:-0.2px;line-height:9px">Gate 2_T_0-13</div>
<div class="t" style="left:272px;top:554px;font-size:7px;color:#202030;font-weight:normal;transform:translateX(-50%);letter-spacing:-0.3px">2.6</div>
<div class="t" style="left:451px;top:554px;font-size:7px;color:#202030;font-weight:normal;transform:translateX(-50%);letter-spacing:-0.2px">(14020.2, 308.6)</div>
<div class="t" style="left:629px;top:554px;font-size:7px;color:#202030;font-weight:normal;transform:translateX(-50%);letter-spacing:-0.3px">40.0</div>
<div class="a" style="left:809px;top:556px;width:3px;height:1px;background:#202030"></div>
<div class="a" style="left:2px;top:562px;width:180px;height:9px;background:#bcdcf8"></div>
<div class="a" style="left:182px;top:562px;width:896px;height:9px;background:#c0bcf0"></div>
<div class="a" style="left:15px;top:563px;width:6px;height:7px;background:#f4f4f4;border-left:1px solid #999"></div>
<div class="t" style="left:24px;top:563px;font-size:6.6px;color:#202030;font-weight:normal;letter-spacing:-0.2px;line-height:9px">Gate 2_T_0-14</div>
<div class="t" style="left:272px;top:564px;font-size:7px;color:#202030;font-weight:normal;transform:translateX(-50%);letter-spacing:-0.3px">7.06</div>
<div class="t" style="left:451px;top:564px;font-size:7px;color:#202030;font-weight:normal;transform:translateX(-50%);letter-spacing:-0.2px">(13122.7, 334.0)</div>
<div class="t" style="left:629px;top:564px;font-size:7px;color:#202030;font-weight:normal;transform:translateX(-50%);letter-spacing:-0.3px">180.0</div>
<div class="a" style="left:809px;top:566px;width:3px;height:1px;background:#202030"></div>
<div class="a" style="left:2px;top:572px;width:180px;height:9px;background:#bcdcf8"></div>
<div class="a" style="left:182px;top:572px;width:896px;height:9px;background:#c0bcf0"></div>
<div class="a" style="left:15px;top:573px;width:6px;height:7px;background:#f4f4f4;border-left:1px solid #999"></div>
<div class="t" style="left:24px;top:573px;font-size:6.6px;color:#202030;font-weight:normal;letter-spacing:-0.2px;line-height:9px">Gate 2_T_0-15</div>
<div class="t" style="left:272px;top:574px;font-size:7px;color:#202030;font-weight:normal;transform:translateX(-50%);letter-spacing:-0.3px">5.91</div>
<div class="t" style="left:451px;top:574px;font-size:7px;color:#202030;font-weight:normal;transform:translateX(-50%);letter-spacing:-0.2px">(13520.3, 334.0)</div>
<div class="t" style="left:629px;top:574px;font-size:7px;color:#202030;font-weight:normal;transform:translateX(-50%);letter-spacing:-0.3px">80.0</div>
<div class="a" style="left:809px;top:576px;width:3px;height:1px;background:#202030"></div>
<div class="a" style="left:2px;top:584px;width:180px;height:9px;background:#bcdcf8"></div>
<div class="a" style="left:182px;top:584px;width:896px;height:9px;background:#c0bcf0"></div>
<div class="a" style="left:15px;top:584px;width:6px;height:7px;background:#f4f4f4;border-left:1px solid #999"></div>
<div class="t" style="left:24px;top:584px;font-size:6.6px;color:#202030;font-weight:normal;letter-spacing:-0.2px;line-height:9px">Gate 2_T_0-16</div>
<div class="t" style="left:272px;top:585px;font-size:7px;color:#202030;font-weight:normal;transform:translateX(-50%);letter-spacing:-0.3px">12.14</div>
<div class="t" style="left:451px;top:585px;font-size:7px;color:#202030;font-weight:normal;transform:translateX(-50%);letter-spacing:-0.2px">(14047.7, 332.9)</div>
<div class="t" style="left:629px;top:585px;font-size:7px;color:#202030;font-weight:normal;transform:translateX(-50%);letter-spacing:-0.3px">36.0</div>
<div class="a" style="left:809px;top:587px;width:3px;height:1px;background:#202030"></div>
<div class="a" style="left:1078px;top:479px;width:10px;height:112px;background:#1e1e1e"></div>
<div class="a" style="left:1081px;top:499px;width:4px;height:38px;background:#9a9a9a;border-radius:2px"></div>
</div>
<div id="doc" class="a">
<div class="a" style="left:14px;top:7px;width:420px;height:39px;border:1px solid #f4a484;border-bottom:2px solid #fbe0d8"></div>
<div class="a" style="left:141px;top:7px;width:1px;height:39px;background:#f4a484"></div>
<div class="a" style="left:348px;top:7px;width:1px;height:39px;background:#f4a484"></div>
<div class="a" style="left:141px;top:20px;width:293px;height:1px;background:#f4a484"></div>
<div class="a" style="left:348px;top:33px;width:86px;height:1px;background:#f4a484"></div>
<svg style="left:21px;top:14px" width="30" height="27"><polygon points="13,1 27,25 1,25" fill="none" stroke="#f8c068" stroke-width="5" stroke-linejoin="miter"/><polygon points="3,24 26,24 26,26 1,26" fill="#f4a080"/><line x1="4" y1="22" x2="11" y2="10" stroke="#f4a080" stroke-width="2"/></svg>
<div class="t" style="left:47.5px;top:12.2px;font-size:24.3px;color:#7898b6;font-weight:normal;letter-spacing:-0.3px;-webkit-text-stroke:0.5px #7898b6">TESTIA</div>
<div class="t" style="left:54px;top:35px;font-size:4.5px;color:#a0a0a8;font-weight:normal;letter-spacing:0.3px">AN AIRBUS COMPANY</div>
<div class="t" style="left:244.5px;top:11px;font-size:8.6px;color:#7090aa;font-weight:bold;transform:translateX(-50%);letter-spacing:-0.35px">STUDY &amp; DEVELOPMENT REPORT</div>
<div class="t" style="left:244.5px;top:28px;font-size:8.5px;color:#7090aa;font-weight:bold;transform:translateX(-50%);letter-spacing:-0.2px">Document N&#176;</div>
<div class="t" style="left:351px;top:11px;font-size:6.5px;color:#8098b0;font-weight:bold;">ISSUE</div>
<div class="t" style="left:425px;top:11px;font-size:6.5px;color:#8098b0;font-weight:bold;">1</div>
<div class="t" style="left:351px;top:23px;font-size:6.5px;color:#8098b0;font-weight:bold;">DATE</div>
<div class="t" style="left:396px;top:23px;font-size:6.5px;color:#8098b0;font-weight:bold;letter-spacing:0px">05/05/2020</div>
<div class="t" style="left:351px;top:36px;font-size:6.5px;color:#8098b0;font-weight:bold;">PAGE</div>
<div class="t" style="left:412px;top:36px;font-size:6.5px;color:#8098b0;font-weight:bold;letter-spacing:-0.4px">2 / 10</div>
<div class="a" style="left:14px;top:56px;width:420px;height:16px;background:#f39200;border-bottom:1px solid #e86a10"></div>
<div class="t" style="left:224px;top:61px;font-size:6.8px;color:#1a2a5a;font-weight:bold;transform:translateX(-50%);letter-spacing:-0.2px">DOCUMENT PROPERTIES SHEET</div>
<div class="a" style="left:14px;top:100px;width:420px;height:67px;border:1px solid #f08058;border-width:1px 2px 2px 2px"></div>
<div class="a" style="left:77px;top:100px;width:1px;height:67px;background:#f08058"></div>
<div class="a" style="left:94px;top:100px;width:2px;height:67px;background:#f8c8b8"></div>
<div class="a" style="left:238px;top:100px;width:1px;height:67px;background:#f08058"></div>
<div class="a" style="left:359px;top:100px;width:1px;height:67px;background:#f08058"></div>
<div class="a" style="left:77px;top:116px;width:161px;height:1px;background:#f08058"></div>
<div class="a" style="left:77px;top:133px;width:161px;height:1px;background:#f08058"></div>
<div class="a" style="left:77px;top:149px;width:161px;height:1px;background:#f08058"></div>
<div class="a" style="left:238px;top:116px;width:196px;height:1px;background:#f08058"></div>
<div class="t" style="left:23px;top:130px;font-size:7px;color:#1a3070;font-weight:bold;letter-spacing:-0.3px">DISTRIBUTION</div>
<div class="a" style="left:84px;top:105px;width:6px;height:6px;border:1px solid #888"></div>
<div class="t" style="left:101px;top:106px;font-size:6.8px;color:#1a3070;font-weight:bold;letter-spacing:-0.2px">CONFIDENTIAL</div>
<div class="a" style="left:84px;top:122px;width:6px;height:6px;border:1px solid #888"></div>
<div class="t" style="left:101px;top:123px;font-size:6.8px;color:#1a3070;font-weight:bold;letter-spacing:-0.2px">INTERNAL USE</div>
<div class="a" style="left:84px;top:138px;width:6px;height:6px;border:1px solid #888"></div>
<div class="t" style="left:101px;top:139px;font-size:6.8px;color:#1a3070;font-weight:bold;letter-spacing:-0.2px">CUSTOMER</div>
<div class="a" style="left:84px;top:155px;width:6px;height:6px;border:1px solid #888"></div>
<div class="t" style="left:101px;top:156px;font-size:6.8px;color:#1a3070;font-weight:bold;letter-spacing:-0.2px">PUBLIC</div>
<div class="a" style="left:84px;top:155px;width:6px;height:2px;background:#666"></div>
<div class="t" style="left:299px;top:105.5px;font-size:7px;color:#1a3070;font-weight:bold;transform:translateX(-50%);letter-spacing:-0.3px">DOCUMENT'S OWNER</div>
<div class="t" style="left:397px;top:105.5px;font-size:7px;color:#1a3070;font-weight:bold;transform:translateX(-50%);letter-spacing:-0.3px">NUMBER OF PAGES</div>
<div class="t" style="left:299px;top:136.5px;font-size:8.7px;color:#1a3070;font-weight:bold;font-style:italic;transform:translateX(-50%);letter-spacing:-0.3px">DEPARTMENT NAME</div>
<div class="t" style="left:397px;top:136px;font-size:8.5px;color:#1a3070;font-weight:bold;transform:translateX(-50%)">3</div>
<div class="a" style="left:21px;top:195px;width:345px;height:92px;background:#9c9c9c"></div>
<div class="a" style="left:20px;top:195px;width:2px;height:382px;background:#000"></div>
<div class="a" style="left:66px;top:195px;width:2px;height:382px;background:#000"></div>
<div class="a" style="left:112px;top:195px;width:2px;height:382px;background:#000"></div>
<div class="a" style="left:157px;top:195px;width:2px;height:382px;background:#000"></div>
<div class="a" style="left:203px;top:195px;width:2px;height:382px;background:#000"></div>
<div class="a" style="left:248px;top:195px;width:2px;height:382px;background:#000"></div>
<div class="a" style="left:365px;top:195px;width:2px;height:382px;background:#000"></div>
<div class="a" style="left:20px;top:194px;width:347px;height:2px;background:#000"></div>
<div class="a" style="left:20px;top:286px;width:347px;height:2px;background:#000"></div>
<div class="a" style="left:20px;top:382px;width:347px;height:2px;background:#000"></div>
<div class="a" style="left:20px;top:479px;width:347px;height:2px;background:#000"></div>
<div class="a" style="left:20px;top:575px;width:347px;height:2px;background:#000"></div>
<div class="t" style="left:44.0px;top:237.3px;font-size:7.5px;color:#000;font-weight:bold;font-family:'Liberation Serif',serif;transform:translateX(-50%);letter-spacing:-0.3px">Name</div>
<div class="t" style="left:90.0px;top:233px;font-size:7.5px;color:#000;font-weight:bold;font-family:'Liberation Serif',serif;transform:translateX(-50%);letter-spacing:-0.3px">Mean value</div>
<div class="t" style="left:90.0px;top:243px;font-size:7.5px;color:#000;font-weight:bold;font-family:'Liberation Serif',serif;transform:translateX(-50%);letter-spacing:-0.3px">(mm)</div>
<div class="t" style="left:135.5px;top:233px;font-size:7.5px;color:#000;font-weight:bold;font-family:'Liberation Serif',serif;transform:translateX(-50%);letter-spacing:-0.3px">Position in 2D</div>
<div class="t" style="left:135.5px;top:243px;font-size:7.5px;color:#000;font-weight:bold;font-family:'Liberation Serif',serif;transform:translateX(-50%);letter-spacing:-0.3px">axis (mm)</div>
<div class="t" style="left:181.0px;top:233px;font-size:7.5px;color:#000;font-weight:bold;font-family:'Liberation Serif',serif;transform:translateX(-50%);letter-spacing:-0.3px">Defect</div>
<div class="t" style="left:181.0px;top:243px;font-size:7.5px;color:#000;font-weight:bold;font-family:'Liberation Serif',serif;transform:translateX(-50%);letter-spacing:-0.3px">surface (mm&#178;)</div>
<div class="t" style="left:226.5px;top:237.3px;font-size:7.5px;color:#000;font-weight:bold;font-family:'Liberation Serif',serif;transform:translateX(-50%);letter-spacing:-0.3px">Comments</div>
<div class="t" style="left:307.5px;top:237.3px;font-size:7.5px;color:#000;font-weight:bold;font-family:'Liberation Serif',serif;transform:translateX(-50%);letter-spacing:-0.3px">Screenshot</div>
<div class="t" style="left:44.0px;top:332.0px;font-size:8px;color:#000;font-weight:normal;font-family:'Liberation Serif',serif;transform:translateX(-50%);letter-spacing:-0.2px">Gate 2_T_0-1</div>
<div class="t" style="left:90.0px;top:332.0px;font-size:8px;color:#000;font-weight:normal;font-family:'Liberation Serif',serif;transform:translateX(-50%);letter-spacing:-0.2px">14.41</div>
<div class="t" style="left:135.5px;top:327.5px;font-size:8px;color:#000;font-weight:normal;font-family:'Liberation Serif',serif;transform:translateX(-50%);letter-spacing:-0.2px">(13247.8,</div>
<div class="t" style="left:135.5px;top:336.5px;font-size:8px;color:#000;font-weight:normal;font-family:'Liberation Serif',serif;transform:translateX(-50%);letter-spacing:-0.2px">74.7)</div>
<div class="t" style="left:181.0px;top:332.0px;font-size:8px;color:#000;font-weight:normal;font-family:'Liberation Serif',serif;transform:translateX(-50%);letter-spacing:-0.2px">44.0</div>
<div class="t" style="left:44.0px;top:428.5px;font-size:8px;color:#000;font-weight:normal;font-family:'Liberation Serif',serif;transform:translateX(-50%);letter-spacing:-0.2px">Gate 2_T_0-2</div>
<div class="t" style="left:90.0px;top:428.5px;font-size:8px;color:#000;font-weight:normal;font-family:'Liberation Serif',serif;transform:translateX(-50%);letter-spacing:-0.2px">7.03</div>
<div class="t" style="left:135.5px;top:424.0px;font-size:8px;color:#000;font-weight:normal;font-family:'Liberation Serif',serif;transform:translateX(-50%);letter-spacing:-0.2px">(13629.9,</div>
<div class="t" style="left:135.5px;top:433.0px;font-size:8px;color:#000;font-weight:normal;font-family:'Liberation Serif',serif;transform:translateX(-50%);letter-spacing:-0.2px">141.5)</div>
<div class="t" style="left:181.0px;top:428.5px;font-size:8px;color:#000;font-weight:normal;font-family:'Liberation Serif',serif;transform:translateX(-50%);letter-spacing:-0.2px">48.0</div>
<div class="t" style="left:44.0px;top:525.0px;font-size:8px;color:#000;font-weight:normal;font-family:'Liberation Serif',serif;transform:translateX(-50%);letter-spacing:-0.2px">Gate 2_T_0-3</div>
<div class="t" style="left:90.0px;top:525.0px;font-size:8px;color:#000;font-weight:normal;font-family:'Liberation Serif',serif;transform:translateX(-50%);letter-spacing:-0.2px">12.08</div>
<div class="t" style="left:135.5px;top:520.5px;font-size:8px;color:#000;font-weight:normal;font-family:'Liberation Serif',serif;transform:translateX(-50%);letter-spacing:-0.2px">(13662.3,</div>
<div class="t" style="left:135.5px;top:529.5px;font-size:8px;color:#000;font-weight:normal;font-family:'Liberation Serif',serif;transform:translateX(-50%);letter-spacing:-0.2px">170.1)</div>
<div class="t" style="left:181.0px;top:525.0px;font-size:8px;color:#000;font-weight:normal;font-family:'Liberation Serif',serif;transform:translateX(-50%);letter-spacing:-0.2px">44.0</div>
<div class="a" style="left:251px;top:289px;width:50px;height:2px;background:linear-gradient(90deg,#e02020,#f0d000 25%,#20c020 50%,#20e0f0 70%,#2040e0)"></div>
<div class="a" style="left:301px;top:288.5px;width:9px;height:1px;background:#bbb"></div>
<div class="a" style="left:343px;top:289px;width:22px;height:2px;background:#777"></div>
<div class="a" style="left:251px;top:291px;width:114px;height:4px;background:#1a1a1a"></div>
<div class="a" style="left:251px;top:295px;width:114px;height:35px;background:#9cf894"></div>
<div class="a" style="left:251px;top:329px;width:114px;height:7px;background:#f8c4c4"></div>
<div class="a" style="left:257px;top:327px;width:4px;height:2px;background:#f8c4c4"></div>
<div class="a" style="left:265px;top:327px;width:4px;height:2px;background:#f8c4c4"></div>
<div class="a" style="left:285px;top:327px;width:4px;height:2px;background:#f8c4c4"></div>
<div class="a" style="left:311px;top:327px;width:4px;height:2px;background:#f8c4c4"></div>
<div class="a" style="left:327px;top:327px;width:4px;height:2px;background:#f8c4c4"></div>
<div class="a" style="left:343px;top:327px;width:4px;height:2px;background:#f8c4c4"></div>
<div class="a" style="left:357px;top:327px;width:4px;height:2px;background:#f8c4c4"></div>
<div class="a" style="left:294px;top:331px;width:8px;height:13px;background:#1010c0"></div>
<div class="a" style="left:298px;top:336px;width:4px;height:14px;background:#1010c0"></div>
<div class="a" style="left:287px;top:331px;width:15px;height:13px;border:0.6px solid #999;border-right:none"></div>
<div class="a" style="left:293px;top:344px;width:9px;height:6px;border:0.6px solid #aaa;border-top:none"></div>
<div class="a" style="left:282px;top:337px;width:6px;height:1px;background:#ccc"></div>
<div class="a" style="left:332px;top:346px;width:6px;height:4px;background:#1030d0"></div>
<div class="a" style="left:291px;top:365px;width:10px;height:10px;background:#f8c8cc"></div>
<div class="a" style="left:251px;top:385px;width:50px;height:2px;background:linear-gradient(90deg,#e02020,#f0d000 25%,#20c020 50%,#20e0f0 70%,#2040e0)"></div>
<div class="a" style="left:301px;top:384.5px;width:9px;height:1px;background:#bbb"></div>
<div class="a" style="left:343px;top:385px;width:22px;height:2px;background:#777"></div>
<div class="a" style="left:251px;top:387px;width:114px;height:4px;background:#1a1a1a"></div>
<div class="a" style="left:296px;top:428px;width:8px;height:10px;background:#c0f020"></div>
<div class="a" style="left:292px;top:428px;width:4px;height:5px;background:#1040d0"></div>
<div class="a" style="left:308px;top:433px;width:3px;height:3px;background:#f0a020"></div>
<div class="a" style="left:285px;top:427px;width:18px;height:21px;border:0.6px solid #aaa"></div>
<div class="a" style="left:335px;top:466px;width:10px;height:11px;background:#1040e0"></div>
<div class="a" style="left:251px;top:481px;width:50px;height:2px;background:linear-gradient(90deg,#e02020,#f0d000 25%,#20c020 50%,#20e0f0 70%,#2040e0)"></div>
<div class="a" style="left:301px;top:480.5px;width:9px;height:1px;background:#bbb"></div>
<div class="a" style="left:343px;top:481px;width:22px;height:2px;background:#777"></div>
<div class="a" style="left:251px;top:483px;width:114px;height:4px;background:#1a1a1a"></div>
<div class="a" style="left:251px;top:489px;width:9px;height:9px;background:#c0f020"></div>
<div class="a" style="left:265px;top:493px;width:3px;height:3px;background:#f0a020"></div>
<div class="a" style="left:293px;top:525px;width:10px;height:11px;background:#1040e0"></div>
<div class="a" style="left:285px;top:524px;width:17px;height:15px;border:0.6px solid #aaa"></div>
<div class="a" style="left:0px;top:588px;width:442px;height:3px;background:#c8c8c8"></div>
</div>
<svg style="left:0;top:0" width="1535" height="591"><polygon points="990,261 1088,261 1088,231 1152,292 1088,352 1088,325 990,325" fill="#f39200"/></svg>
</body></html>
